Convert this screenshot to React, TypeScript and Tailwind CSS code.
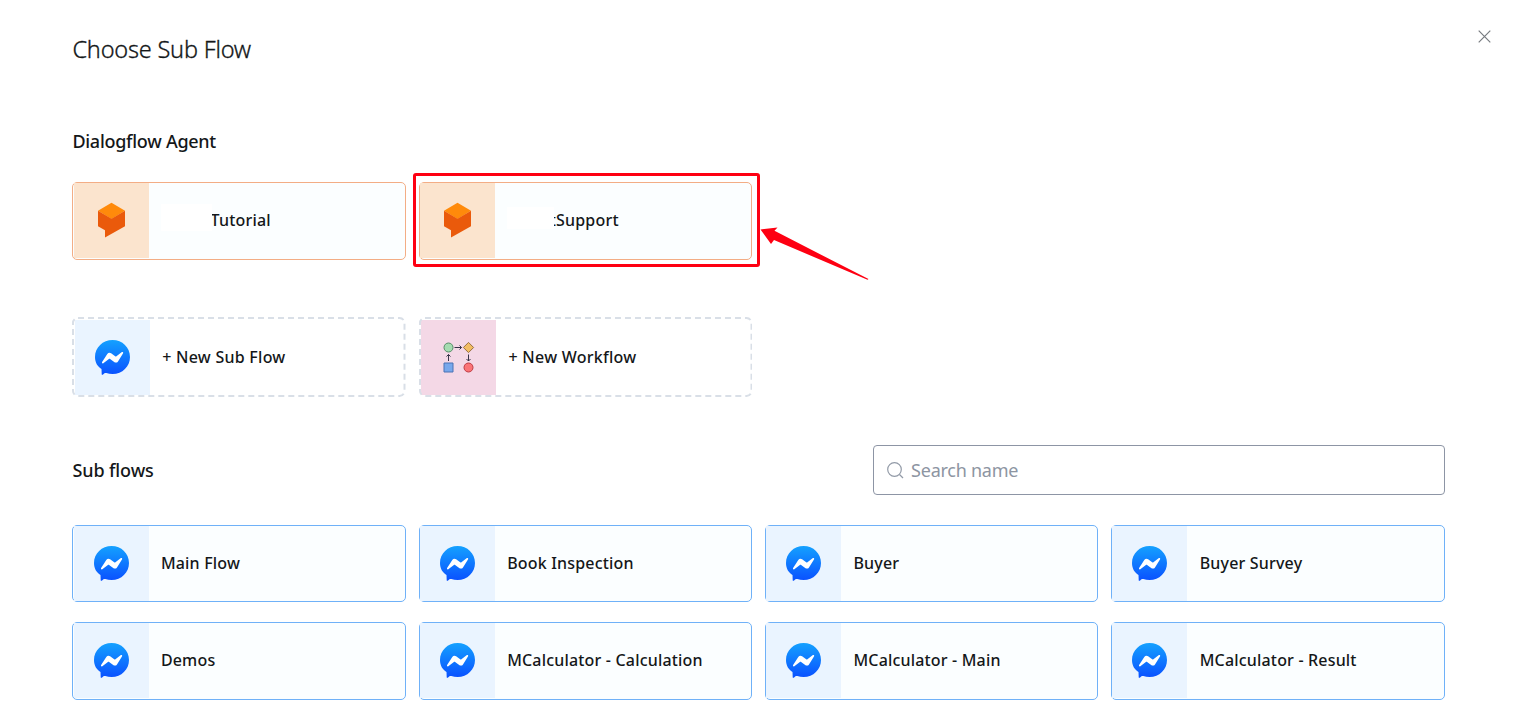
import React from "react";

function Messenger() {
  return (
    <svg width="36" height="36" viewBox="0 0 36 36" aria-hidden="true">
      <defs>
        <linearGradient id="bubble" x1="0" y1="0" x2="0" y2="1">
          <stop offset="0" stopColor="#14a1ff" />
          <stop offset="1" stopColor="#0a50ff" />
        </linearGradient>
      </defs>
      <path
        fill="url(#bubble)"
        d="M17.600 0C27.400 0 35 7.400 35 17S27.400 34 17.600 34c-2.300 0-4.400-.3-6.200-.9-.8-.2-1.500-.1-2.200.3l-1.400 1.300c-.9.4-1.100.1-1.100-.8l-.2-4.900C2.500 26.500 0 22.500 0 17 0 7.400 7.800 0 17.600 0Z"
      />
      <path
        fill="#fff"
        d="m7.100 22.100 5.200-8.200c.8-1.300 2.500-1.600 3.800-.7l4.100 3.100c.4.300.8.300 1.200 0l5.500-4.200c.7-.6 1.700.3 1.200 1.100L23 21.400c-.8 1.300-2.500 1.600-3.800.7l-4.100-3.100c-.4-.3-.8-.3-1.200 0l-5.600 4.200c-.7.6-1.700-.3-1.200-1.100Z"
      />
    </svg>
  );
}

function Dialogflow() {
  return (
    <svg width="28" height="36" viewBox="0 0 28 36" aria-hidden="true">
      <path fill="#ff8a0b" d="M13.500 .8 27 8.700 13.500 17 0 8.700Z" />
      <path fill="#ea5a0b" d="M0 8.700 13.500 16.700l13.500-8v15.600L7 35.400v-7.200l-7-4Z" />
    </svg>
  );
}

function Workflow() {
  return (
    <svg width="32" height="32" viewBox="0 0 32 32" fill="none" aria-hidden="true">
      <circle cx="5.500" cy="5.500" r="4.500" fill="#a5dcb0" stroke="#568b67" />
      <path d="m25.500.4 5.100 5.100-5.100 5.100-5.100-5.100Z" fill="#f2bd63" stroke="#98703f" />
      <path d="M1 21h9v9H1Z" fill="#78a8ec" stroke="#4a73b4" />
      <circle cx="25.500" cy="25.500" r="4.500" fill="#fb7477" stroke="#bd3a43" />
      <path d="M11.500 5.500h7m-2-2 2 2-2 2M5.500 19v-6.500m-2 2 2-2 2 2M25.500 12.500V19m-2-2 2 2 2-2" stroke="#373348" />
    </svg>
  );
}

function FlowCard({ name, tall }: { name: string; tall?: boolean }) {
  return (
    <div className={`flex rounded-[5px] border border-[#6fb1f8] bg-[#fbfeff] pl-[0.2px] ${tall ? "h-[78px]" : "h-[77px]"}`}>
      <div className="flex h-[75px] w-[75px] shrink-0 items-center justify-center bg-[#eaf4ff] pl-px">
        <Messenger />
      </div>
      <span className="self-center pb-0.5 pl-[12.3px] text-base leading-6 font-medium tracking-[0.18px]">{name}</span>
    </div>
  );
}

function AgentCard({ children }: { children: React.ReactNode }) {
  return (
    <div className="relative flex h-[78px] rounded-[5px] border border-[#f3ad85] bg-[#fbfeff] pl-[0.2px]">
      <div className="flex h-[75px] w-[75px] shrink-0 items-center justify-center bg-[#fbe4ce] pb-0.5 pl-px">
        <Dialogflow />
      </div>
      {children}
    </div>
  );
}

function NewCard({ label, color, children }: { label: string; color: string; children: React.ReactNode }) {
  return (
    <div className="relative flex h-20 py-[3px] pl-[2.5px]">
      <svg className="absolute inset-0 h-full w-full" fill="none" aria-hidden="true">
        <rect x="1" y="1" width="331.500" height="78" rx="5" stroke="#d9dfe7" strokeWidth="2" strokeDasharray="6 4" />
      </svg>
      <div className={`flex h-[75px] w-[75px] shrink-0 items-center justify-center ${color}`}>{children}</div>
      <span className="self-center pl-[12.4px] text-base leading-6 font-medium tracking-[0.25px]">{label}</span>
    </div>
  );
}

const firstRow = ["Main Flow", "Book Inspection", "Buyer", "Buyer Survey"];
const secondRow = ["Demos", "MCalculator - Calculation", "MCalculator - Main", "MCalculator - Result"];

export default function App() {
  return (
    <main className="h-[709px] w-[1515px] overflow-hidden bg-white pr-[70.5px] pl-[72.4px] font-['Noto_Sans',sans-serif] text-[#141719]">
      <header className="relative flex h-[124px] pt-[33px]">
        <h1 className="text-[23.5px] leading-8 font-light tracking-[-0.2px] [-webkit-text-stroke:0.3px_#141719]">Choose Sub Flow</h1>
        <button aria-label="Close" className="absolute top-[30px] -right-[46.5px]">
          <svg width="13" height="13" viewBox="0 0 13 13" stroke="#777b80" strokeWidth="1.200">
            <path d="m.7.7 11.600 11.600m0-11.600L.7 12.300" />
          </svg>
        </button>
      </header>
      <h2 className="h-[58px] pt-1 text-lg leading-[26px] font-medium tracking-[-0.27px]">Dialogflow Agent</h2>

      <section className="grid grid-cols-4 gap-x-[13px]">
        <AgentCard>
          <span className="self-center pb-0.5 pl-[62px] text-base leading-6 font-medium tracking-[0.2px]">Tutorial</span>
          <div className="absolute top-[21px] left-[88px] h-[27px] w-[50.5px] bg-white" />
        </AgentCard>
        <div className="relative">
          <AgentCard>
            <span className="self-center pb-0.5 pl-[54.8px] text-base leading-6 font-medium tracking-[0.2px]">tSupport</span>
            <div className="absolute top-[24px] left-[87px] h-[22px] w-[47.500px] bg-white" />
          </AgentCard>
          <div className="absolute -top-[9px] -left-[5.500px] h-[94px] w-[347px] rounded-[3px] border-[3px] border-[#fe0012]" />
          <svg className="absolute top-[44px] left-[341px]" width="110" height="56" viewBox="0 0 110 56" aria-hidden="true">
            <path fill="#fe0012" d="m.5 3.500 17-2-3 3.300L108.500 53.100l-1 .7L14 14l-3 4Z" />
          </svg>
        </div>
      </section>

      <section className="mt-[57px] grid grid-cols-4 gap-x-[13px]">
        <NewCard label="+ New Sub Flow" color="bg-[#eaf4ff] pl-px">
          <Messenger />
        </NewCard>
        <NewCard label="+ New Workflow" color="bg-[#f4d8e6]">
          <Workflow />
        </NewCard>
      </section>

      <div className="mt-12 flex h-[50px] items-center justify-between">
        <h2 className="text-lg leading-6 font-medium tracking-[-0.1px]">Sub flows</h2>
        <label className="flex h-[50px] w-[572px] items-center rounded-[4px] border border-[#8d95a5] px-[13px]">
          <svg width="17" height="17" viewBox="0 0 17 17" fill="none" stroke="#929aa7" strokeWidth="1.200">
            <circle cx="7.500" cy="7.500" r="6.800" />
            <path d="m12.500 12.500 3.500 3.500" />
          </svg>
          <input placeholder="Search name" className="ml-[7.6px] flex-1 text-lg tracking-[-0.25px] outline-none placeholder:text-[#8d95a2]" />
        </label>
      </div>

      <section className="mt-[30px] grid grid-cols-4 gap-x-[13px] gap-y-5">
        {firstRow.map((name) => <FlowCard key={name} name={name} />)}
        {secondRow.map((name) => <FlowCard key={name} name={name} tall />)}
      </section>
    </main>
  );
}
